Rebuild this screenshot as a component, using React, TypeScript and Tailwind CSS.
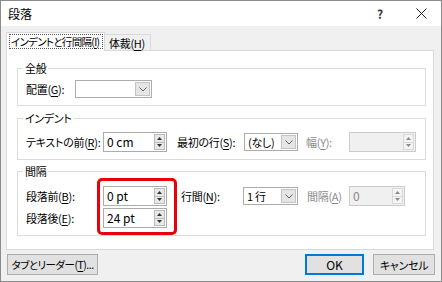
import React from "react";

const U = ({ c }: { c: string }) => (
  <span className="underline underline-offset-[2px] decoration-[1px]">{c}</span>
);

function Tri({ up, disabled }: { up?: boolean; disabled?: boolean }) {
  return (
    <svg width="5" height="3" viewBox="0 0 5 3">
      <path d={up ? "M0 3 L2.5 0 L5 3 Z" : "M0 0 L2.5 3 L5 0 Z"} fill={disabled ? "#8a8a8a" : "#333"} />
    </svg>
  );
}

function Spin({ value, w, disabled }: { value: string; w: string; disabled?: boolean }) {
  return (
    <div
      className={`flex h-[20px] border ${w} ${
        disabled ? "border-[#cccccc] bg-[#f0f0f0] text-[#8a8a8a]" : "border-[#acacac] bg-white text-black"
      }`}
    >
      <div className="flex-1 pl-[3px] flex items-center leading-none text-[12px] tracking-normal">{value}</div>
      <div className="w-[11px] flex flex-col my-[1px] mr-[1px]">
        <div className={`flex-1 flex items-center justify-center border ${disabled ? "border-[#d8d8d8] bg-[#f4f4f4]" : "border-[#bcbcbc] bg-[#e8e8e8]"}`}>
          <Tri up disabled={disabled} />
        </div>
        <div className={`flex-1 flex items-center justify-center border border-t-0 ${disabled ? "border-[#d8d8d8] bg-[#f4f4f4]" : "border-[#bcbcbc] bg-[#e8e8e8]"}`}>
          <Tri disabled={disabled} />
        </div>
      </div>
    </div>
  );
}

function Combo({ value, w }: { value: string; w: string }) {
  return (
    <div className={`flex h-[18px] border border-[#acacac] bg-white ${w}`}>
      <div className="flex-1 pl-[3px] flex items-center leading-none whitespace-nowrap">{value}</div>
      <div className="w-[15px] m-[1px] border border-[#c4c4c4] bg-[#e5e5e5] flex items-center justify-center">
        <svg width="8" height="5" viewBox="0 0 8 5">
          <path d="M0.5 0.5 L4 4 L7.5 0.5" fill="none" stroke="#606060" strokeWidth="1" />
        </svg>
      </div>
    </div>
  );
}

export default function App() {
  return (
    <div className="w-[442px] h-[282px] border border-[#8c8c8c] bg-[#f0f0f0] flex flex-col text-[11px] tracking-[-0.3px] text-black font-['Noto_Sans_CJK_JP',sans-serif] [font-feature-settings:'palt'] leading-[14px] overflow-hidden whitespace-nowrap">
      {/* title bar */}
      <div className="h-[25px] bg-white flex items-center pl-[7px] shrink-0">
        <span className="text-[12px] tracking-normal">段落</span>
        <span className="ml-auto w-[10px] mr-[29px] text-[12px] font-bold text-[#333]">?</span>
        <svg width="11" height="11" viewBox="0 0 11 11" className="mr-[14px]">
          <path d="M0.5 0.5 L10.5 10.5 M10.5 0.5 L0.5 10.5" stroke="#222" strokeWidth="1" />
        </svg>
      </div>

      {/* tabs */}
      <div className="mt-[6px] ml-[5px] flex items-end h-[18px] relative z-10 shrink-0">
        <div className="relative z-20 h-[19px] -mb-[1px] w-[99px] shrink-0 bg-white border border-b-0 border-[#d9d9d9] pl-[2px] pr-[1px] pt-[1px] flex items-start">
          <div className="border border-dotted border-[#555] pl-[1px] h-[15px] w-full flex items-center text-[10.5px] tracking-[-0.7px]">
            インデントと行間隔(<U c="I" />)
          </div>
        </div>
        <div className="h-[16px] w-[46px] shrink-0 bg-[#f0f0f0] border border-l-0 border-b-0 border-[#d9d9d9] pl-[4px] flex items-center">
          体裁(<U c="H" />)
        </div>
      </div>

      {/* panel */}
      <div className="ml-[5px] mr-[7px] h-[200px] shrink-0 bg-white border border-[#d9d9d9] pl-[10px] pt-[10px] flex flex-col">
        {/* 全般 */}
        <fieldset className="w-[409px] border border-[#dcdcdc] pl-[8px] pb-[7px]">
          <legend className="-ml-[3px] px-[2px] leading-[14px]">全般</legend>
          <div className="mt-[5px] flex items-center h-[18px]">
            <span className="w-[49px]">
              配置(<U c="G" />):
            </span>
            <Combo value="" w="w-[77px]" />
          </div>
        </fieldset>

        {/* インデント */}
        <fieldset className="mt-[5px] w-[409px] border border-[#dcdcdc] pl-[8px] pb-[7px]">
          <legend className="-ml-[3px] px-[2px] leading-[14px]">インデント</legend>
          <div className="mt-[7px] flex items-center h-[20px]">
            <span className="w-[77px]">
              テキストの前(<U c="R" />):
            </span>
            <Spin value="0 cm" w="w-[64px]" />
            <span className="ml-[10px] w-[67px]">
              最初の行(<U c="S" />):
            </span>
            <Combo value="(なし)" w="w-[54px]" />
            <span className="ml-[8px] w-[43px] text-[#8a8a8a]">
              幅(<U c="Y" />):
            </span>
            <Spin value="" w="w-[67px]" disabled />
          </div>
        </fieldset>

        {/* 間隔 */}
        <fieldset className="mt-[4px] w-[409px] border border-[#dcdcdc] pl-[8px] pb-0">
          <legend className="-ml-[3px] px-[2px] leading-[14px]">間隔</legend>
          <div className="flex items-start">
            <div className="w-[71px] pt-[8px] flex flex-col gap-[2px]">
              <div className="h-[20px] flex items-center">
                段落前(<U c="B" />):
              </div>
              <div className="h-[20px] flex items-center">
                段落後(<U c="E" />):
              </div>
            </div>
            <div className="border-[3px] border-[#e8000b] rounded-[5px] pl-[3px] pr-[7px] pt-[5px] pb-[4px] flex flex-col gap-[2px]">
              <Spin value="0 pt" w="w-[64px]" />
              <Spin value="24 pt" w="w-[64px]" />
            </div>
            <div className="pt-[8px] flex items-center h-[28px]">
              <span className="ml-[4px] w-[62px]">
                行間(<U c="N" />):
              </span>
              <Combo value="1 行" w="w-[55px]" />
              <span className="ml-[9px] w-[42px] text-[#8a8a8a]">
                間隔(<U c="A" />)
              </span>
              <Spin value="0" w="w-[56px]" disabled />
            </div>
          </div>
        </fieldset>
      </div>

      {/* buttons */}
      <div className="mt-[4px] pl-[6px] pr-[6px] flex items-center shrink-0">
        <button className="h-[21px] w-[91px] bg-[#e1e1e1] border border-[#adadad] flex items-center justify-center text-[10.5px] tracking-[-0.5px]">
          タブとリーダー(<U c="T" />)...
        </button>
        <button className="ml-auto h-[21px] w-[59px] bg-[#e1e1e1] border-2 border-[#0078d7] flex items-center justify-center text-[12px] tracking-normal">
          OK
        </button>
        <button className="ml-[9px] h-[21px] w-[62px] bg-[#e1e1e1] border border-[#adadad] flex items-center justify-center">
          キャンセル
        </button>
      </div>
    </div>
  );
}
